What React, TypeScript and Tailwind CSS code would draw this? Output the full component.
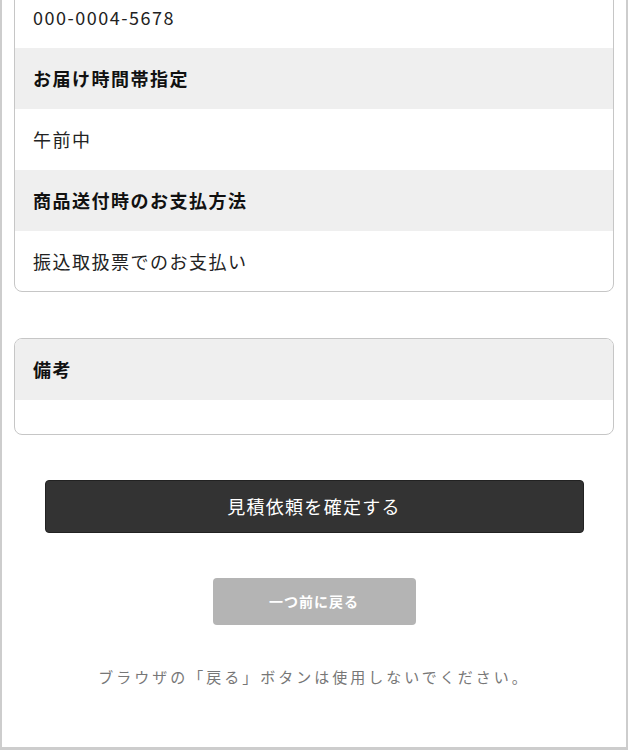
const font = { fontFamily: '"Noto Sans CJK JP", "Noto Sans", sans-serif' };

type Row = { label?: string; value: string };

const rows: Row[] = [
  { value: '000-0004-5678' },
  { label: 'お届け時間帯指定', value: '午前中' },
  { label: '商品送付時のお支払方法', value: '振込取扱票でのお支払い' },
];

function HeaderCell({ children }: { children: React.ReactNode }) {
  return (
    <div className="bg-[#efefef] px-[18px] py-[20px] text-[18px] leading-[21px] font-bold tracking-[1.5px] text-[#111]">
      {children}
    </div>
  );
}

function ValueCell({ children, last }: { children: React.ReactNode; last?: boolean }) {
  return (
    <div
      className={`px-[18px] pt-[20px] ${last ? 'pb-[19px]' : 'pb-[20px]'} text-[18px] leading-[21px] tracking-[1.5px] text-[#222]`}
    >
      {children}
    </div>
  );
}

export default function App() {
  return (
    <div
      className="box-border w-[628px] h-[750px] overflow-hidden border-x-2 border-b-[3px] border-[#cdcdcd] bg-white"
      style={font}
    >
      <div className="px-3">
        {/* Order details (scrolled, top of card is above the fold) */}
        <div className="-mt-[14px] rounded-[8px] border border-[#c6c6c6] overflow-hidden">
          {rows.map((row, i) => (
            <div key={i}>
              {row.label && <HeaderCell>{row.label}</HeaderCell>}
              <ValueCell last={i === rows.length - 1}>{row.value}</ValueCell>
            </div>
          ))}
        </div>

        {/* Remarks */}
        <div className="mt-[46px] rounded-[8px] border border-[#c6c6c6] overflow-hidden">
          <HeaderCell>備考</HeaderCell>
          <div className="h-[34px]" />
        </div>

        {/* Actions */}
        <div className="mt-[45px] flex flex-col items-center">
          <button className="w-[539px] h-[53px] rounded-[4px] border border-[#222] bg-[#333] text-white text-[18px] tracking-[1.3px]">
            見積依頼を確定する
          </button>
          <button className="mt-[45px] w-[203px] h-[47px] rounded-[4px] bg-[#b4b4b4] text-white text-[14px] font-bold tracking-[1px]">
            一つ前に戻る
          </button>
          <p className="mt-[41px] text-[15px] leading-[22px] tracking-[3px] text-[#777]">
            ブラウザの「戻る」ボタンは使用しないでください。
          </p>
        </div>
      </div>
    </div>
  );
}
